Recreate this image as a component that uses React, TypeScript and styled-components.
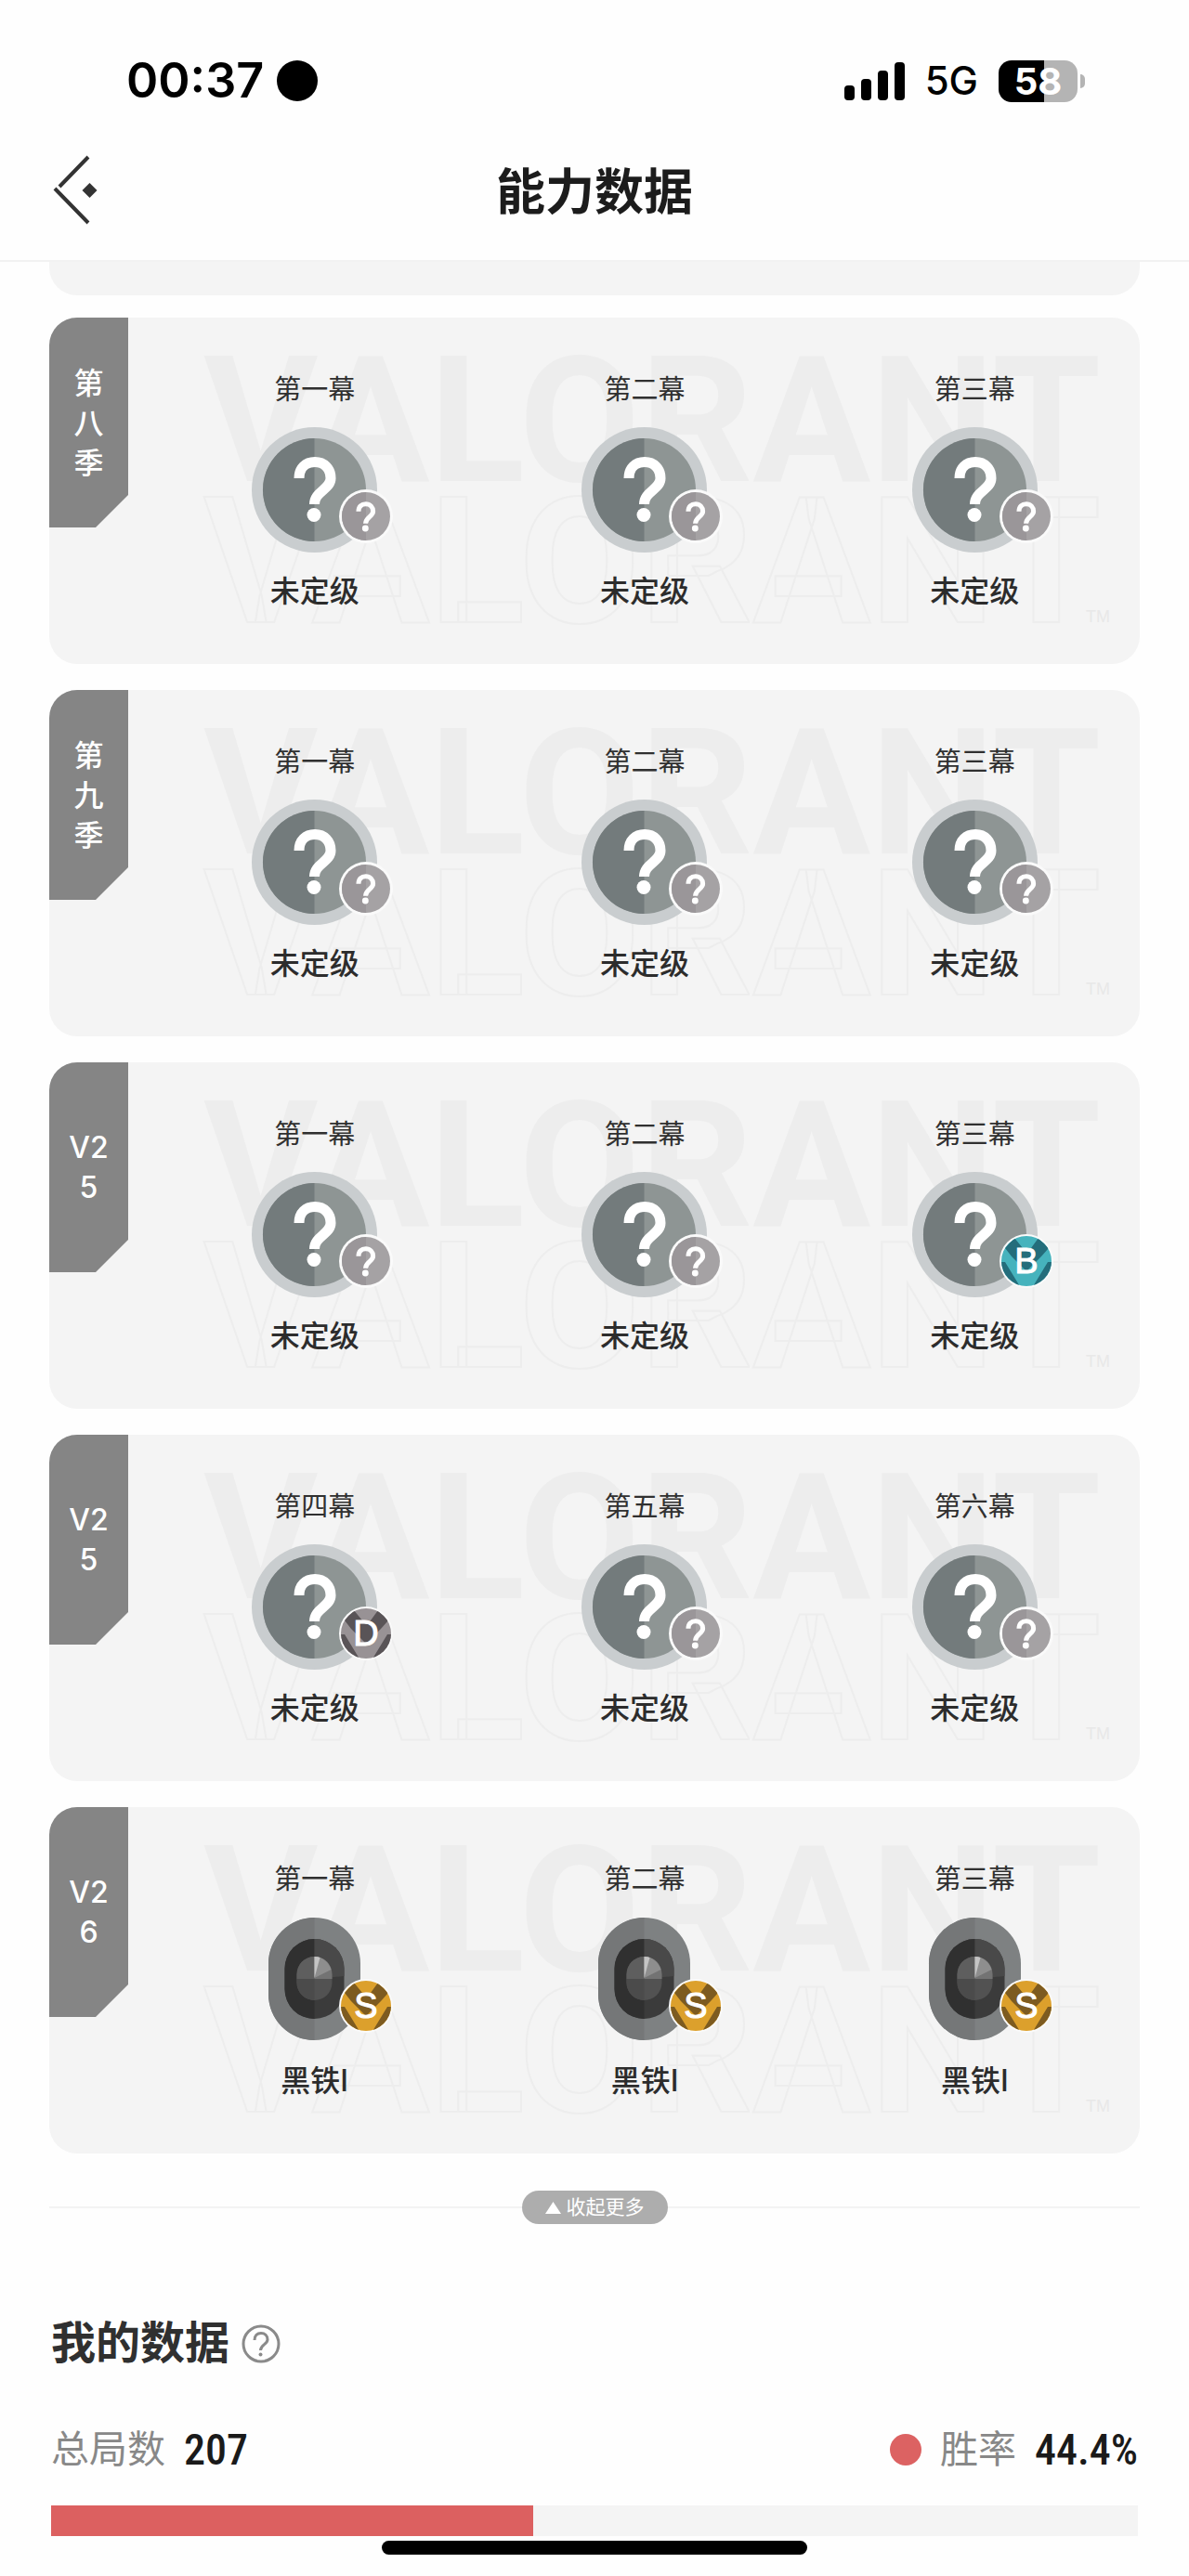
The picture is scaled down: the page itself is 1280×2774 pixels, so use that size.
import React from "react";
import styled, { createGlobalStyle } from "styled-components";

const GlobalStyle = createGlobalStyle`
  *, *::before, *::after { box-sizing: border-box; }
  body {
    margin: 0;
    background: #fefefe;
    color: #303030;
    font-family: "Liberation Sans", "Noto Sans CJK SC", sans-serif;
  }
`;

const Page = styled.div`
  display: flex;
  flex-direction: column;
`;

/* ---------- status bar ---------- */

const StatusBar = styled.div`
  display: flex;
  align-items: center;
  justify-content: space-between;
  height: 130px;
  padding: 44px 112px 0 136px;
  color: #000;
  font-family: Inter, sans-serif;
`;

const StatusGroup = styled.div<{ $gap: number }>`
  display: flex;
  align-items: center;
  gap: ${(p) => p.$gap}px;
`;

const Clock = styled.time`
  font-size: 52px;
  font-weight: 600;
  line-height: 60px;
`;

const RecordingDot = styled.span`
  width: 44px;
  height: 44px;
  border-radius: 50%;
  background: #000;
`;

const Signal = styled.span`
  display: flex;
  align-items: flex-end;
  gap: 7px;
  height: 42px;
`;

const SignalBar = styled.i<{ $height: number }>`
  width: 11px;
  height: ${(p) => p.$height}px;
  border-radius: 4px;
  background: #000;
`;

const Network = styled.span`
  font-size: 42px;
  font-weight: 500;
  line-height: 60px;
`;

const BatteryWrap = styled.span`
  display: flex;
  align-items: center;
  gap: 3px;
`;

const Battery = styled.span`
  display: flex;
  align-items: center;
  justify-content: center;
  width: 85px;
  height: 45px;
  border-radius: 14px;
  background: linear-gradient(90deg, #000 58%, #b4b4b4 58%);
  color: #fff;
  font-size: 40px;
  font-weight: 700;
  line-height: 45px;
`;

const BatteryNub = styled.i`
  width: 5px;
  height: 15px;
  border-radius: 0 5px 5px 0;
  background: #b4b4b4;
`;

/* ---------- navigation ---------- */

const NavBar = styled.header`
  display: grid;
  grid-template-columns: 1fr auto 1fr;
  align-items: center;
  height: 152px;
  padding: 0 53px;
  border-bottom: 2px solid #f2f2f2;
`;

const BackButton = styled.button`
  justify-self: start;
  display: flex;
  padding: 0;
  border: 0;
  background: none;
  cursor: pointer;
`;

const NavTitle = styled.h1`
  margin: 0;
  padding-top: 6px;
  color: #1c1c1c;
  font-size: 53px;
  font-weight: 700;
  line-height: 80px;
`;

/* ---------- season cards ---------- */

const Content = styled.main`
  display: flex;
  flex-direction: column;
  padding: 0 53px;
`;

const CardTail = styled.div`
  height: 36px;
  border-radius: 0 0 30px 30px;
  background: #f4f4f4;
`;

const SeasonList = styled.div`
  display: flex;
  flex-direction: column;
  gap: 28px;
  padding-top: 24px;
`;

const Card = styled.section`
  position: relative;
  overflow-x: clip;
  padding: 58px 0 56px 108px;
  border-radius: 30px;
  background: #f4f4f4;
`;

const SeasonTab = styled.h2`
  position: absolute;
  top: 0;
  left: 0;
  display: flex;
  align-items: center;
  justify-content: center;
  width: 85px;
  height: 226px;
  margin: 0;
  padding: 0 20px;
  border-top-left-radius: 30px;
  background: #858585;
  clip-path: polygon(0 0, 100% 0, 100% 191px, 50px 100%, 0 100%);
  color: #fff;
  font-family: Inter, "Noto Sans CJK SC", sans-serif;
  font-size: 32px;
  font-weight: 500;
  line-height: 43px;
  text-align: center;
  word-break: break-all;
`;

const Watermark = styled.div`
  position: absolute;
  top: 36px;
  left: 166px;
  color: #ededed;
  font-family: Roboto, sans-serif;
  font-size: 189px;
  font-weight: 700;
  line-height: 152px;
  white-space: nowrap;
  user-select: none;
`;

const WatermarkOutline = styled.div`
  color: #f4f4f4;
  -webkit-text-stroke: 2px #ededed;
`;

const TradeMark = styled.span`
  position: absolute;
  right: 32px;
  bottom: 42px;
  color: #e8e8e8;
  font-size: 18px;
  line-height: 18px;
`;

const ActGrid = styled.div`
  position: relative;
  display: grid;
  grid-template-columns: repeat(3, 1fr);
`;

const Act = styled.article`
  display: flex;
  flex-direction: column;
  align-items: center;
`;

const ActName = styled.h3`
  margin: 0 0 20px;
  font-size: 29px;
  font-weight: 400;
  line-height: 40px;
`;

const RankName = styled.p`
  margin: 20px 0 0;
  color: #2c2c2c;
  font-family: Inter, "Noto Sans CJK SC", sans-serif;
  font-size: 32px;
  font-weight: 500;
  line-height: 44px;
`;

const Emblem = styled.div`
  position: relative;
  width: 135px;
  height: 135px;
  svg { display: block; }
`;

const GradeSlot = styled.div`
  position: absolute;
  right: -17px;
  bottom: 10px;
`;

/* ---------- collapse control ---------- */

const CollapseRow = styled.div`
  display: flex;
  align-items: center;
  margin-top: 40px;
  &::before, &::after {
    content: "";
    flex: 1;
    height: 2px;
    background: #f3f3f3;
  }
`;

const CollapseButton = styled.button`
  display: flex;
  align-items: center;
  gap: 6px;
  height: 36px;
  padding: 0 25px;
  border: 0;
  border-radius: 18px;
  background: #adadad;
  color: #fff;
  font-family: inherit;
  font-size: 21px;
  line-height: 36px;
  cursor: pointer;
`;

/* ---------- my data ---------- */

const DataSection = styled.section`
  display: flex;
  flex-direction: column;
  margin-top: 99px;
  padding: 0 2px;
`;

const DataHeading = styled.div`
  display: flex;
  align-items: center;
  gap: 13px;
`;

const DataTitle = styled.h2`
  margin: 0;
  font-size: 48px;
  font-weight: 700;
  line-height: 60px;
`;

const HelpButton = styled.button`
  display: flex;
  padding: 0;
  border: 0;
  background: none;
  cursor: pointer;
`;

const StatRow = styled.div`
  display: flex;
  justify-content: space-between;
  margin: 56px 0 32px;
`;

const Stat = styled.div`
  display: flex;
  align-items: center;
  gap: 20px;
  height: 56px;
`;

const StatLabel = styled.span`
  color: #888;
  font-size: 41px;
  line-height: 56px;
`;

const StatValue = styled.strong`
  color: #1a1a1a;
  font-family: "Liberation Sans Narrow", "Roboto Condensed", Roboto, sans-serif;
  font-size: 46px;
  font-weight: 500;
  line-height: 56px;
`;

const WinDot = styled.i`
  width: 34px;
  height: 34px;
  border-radius: 50%;
  background: #dc6262;
`;

const Track = styled.div`
  height: 33px;
  background: #f4f4f4;
`;

const Fill = styled.div`
  height: 100%;
  background: #dc6060;
`;

const HomeArea = styled.footer`
  display: flex;
  justify-content: center;
  padding: 5px 0 24px;
`;

const HomeIndicator = styled.div`
  width: 458px;
  height: 15px;
  border-radius: 8px;
  background: #000;
`;

/* ---------- drawings ---------- */

const QuestionStroke = () => (
  <>
    <path
      d="M51 55C51 44 58 37.500 68 37.500C78 37.500 85 44.500 85 55C85 67 67.500 69 67.500 83"
      fill="none"
      stroke="#fff"
      strokeWidth="11"
    />
    <circle cx="67" cy="94.500" r="7.500" fill="#fff" />
  </>
);

const UnrankedEmblem = () => (
  <svg width="135" height="135" viewBox="0 0 135 135" aria-hidden="true">
    <circle cx="67.500" cy="67.500" r="67.500" fill="#c9cdcf" />
    <circle cx="67.500" cy="67.500" r="55.500" fill="#8e9594" />
    <path d="M67.500 12a55.500 55.500 0 0 0 0 111z" fill="#737b7c" />
    <QuestionStroke />
  </svg>
);

const IronEmblem = () => (
  <svg width="135" height="135" viewBox="0 0 135 135" aria-hidden="true">
    <rect x="18" y="1" width="99" height="132" rx="49.500" fill="#7e8182" />
    <path d="M67.500 1v132A49.500 49.500 0 0 1 18 83.500v-33A49.500 49.500 0 0 1 67.500 1z" fill="#757778" />
    <rect x="35.500" y="24" width="64" height="86" rx="32" fill="#3b3b3b" />
    <path d="M67.500 24v86a32 32 0 0 1-32-32V56a32 32 0 0 1 32-32z" fill="#303030" />
    <path d="M67.500 24a32 32 0 0 1 32 32v8L67.500 67z" fill="#494949" />
    <rect x="48.500" y="43" width="38" height="47" rx="19" fill="#525252" />
    <path d="M67.500 43v24h-19v-5a19 19 0 0 1 19-19z" fill="#5e5e5e" />
    <path d="M67.500 43a19 19 0 0 1 19 19v5h-19z" fill="#737373" />
    <path d="M67.500 43a19 19 0 0 1 18 14l-18 9z" fill="#8e8e8e" />
    <path d="M67.500 43q4 0 6 1l-6 22z" fill="#c4c4c4" />
    <path d="M67.500 67v23a19 19 0 0 1-19-19v-4z" fill="#4b4b4b" />
  </svg>
);

type Grade = "?" | "B" | "D" | "S";

const gradeColors: Record<Exclude<Grade, "?">, { base: string; dark: string }> = {
  B: { base: "#46b3bd", dark: "#246d7b" },
  D: { base: "#989295", dark: "#595457" },
  S: { base: "#dca02c", dark: "#7d5b20" },
};

const GradeBadge = ({ grade }: { grade: Grade }) => {
  const clipId = React.useId();
  if (grade === "?") {
    return (
      <svg width="58" height="58" viewBox="0 0 58 58" aria-hidden="true">
        <circle cx="29" cy="29" r="29" fill="#fafafa" />
        <circle cx="29" cy="29" r="26" fill="#a5a2a4" />
        <path d="M29 3a26 26 0 0 0 0 52z" fill="#9a9699" />
        <g transform="translate(-2.500 -1.500) scale(.46)">
          <QuestionStroke />
        </g>
      </svg>
    );
  }
  const c = gradeColors[grade];
  return (
    <svg width="58" height="58" viewBox="0 0 58 58" role="img" aria-label={grade}>
      <clipPath id={clipId}>
        <circle cx="29" cy="29" r="27" />
      </clipPath>
      <circle cx="29" cy="29" r="29" fill="#fafafa" />
      <g clipPath={`url(#${clipId})`}>
        <rect width="58" height="58" fill={c.base} />
        <path d="M6 15L16 4l9 11h9L42 4l11 11-8 9-16 16-16-16z" fill={c.dark} />
        <path d="M0 30h6l17 28H0zM58 30h-6L35 58h23z" fill={c.dark} />
      </g>
      <text
        x="29"
        y="42"
        textAnchor="middle"
        fill="#fff"
        fontFamily="'Liberation Sans', sans-serif"
        fontSize="38"
        stroke="#fff"
        strokeWidth="1"
      >
        {grade}
      </text>
    </svg>
  );
};

/* ---------- data ---------- */

type ActData = { name: string; rank: "未定级" | "黑铁I"; grade: Grade };

const act = (name: string, grade: Grade = "?", rank: ActData["rank"] = "未定级"): ActData => ({
  name,
  rank,
  grade,
});

const seasons: { id: string; label: string; acts: ActData[] }[] = [
  { id: "s8", label: "第八季", acts: [act("第一幕"), act("第二幕"), act("第三幕")] },
  { id: "s9", label: "第九季", acts: [act("第一幕"), act("第二幕"), act("第三幕")] },
  { id: "v25a", label: "V25", acts: [act("第一幕"), act("第二幕"), act("第三幕", "B")] },
  { id: "v25b", label: "V25", acts: [act("第四幕", "D"), act("第五幕"), act("第六幕")] },
  {
    id: "v26",
    label: "V26",
    acts: [act("第一幕", "S", "黑铁I"), act("第二幕", "S", "黑铁I"), act("第三幕", "S", "黑铁I")],
  },
];

const winRate = 44.4;

const SeasonCard = ({ label, acts }: { label: string; acts: ActData[] }) => (
  <Card>
    <Watermark aria-hidden="true">
      <div>VALORANT</div>
      <WatermarkOutline>VALORANT</WatermarkOutline>
    </Watermark>
    <TradeMark aria-hidden="true">TM</TradeMark>
    <SeasonTab>{label}</SeasonTab>
    <ActGrid>
      {acts.map((a) => (
        <Act key={a.name}>
          <ActName>{a.name}</ActName>
          <Emblem>
            {a.rank === "未定级" ? <UnrankedEmblem /> : <IronEmblem />}
            <GradeSlot>
              <GradeBadge grade={a.grade} />
            </GradeSlot>
          </Emblem>
          <RankName>{a.rank}</RankName>
        </Act>
      ))}
    </ActGrid>
  </Card>
);

export default function App() {
  return (
    <Page>
      <GlobalStyle />
      <StatusBar>
        <StatusGroup $gap={14}>
          <Clock>00:37</Clock>
          <RecordingDot />
        </StatusGroup>
        <StatusGroup $gap={22}>
          <Signal>
            {[16, 23, 32, 41].map((h) => (
              <SignalBar key={h} $height={h} />
            ))}
          </Signal>
          <Network>5G</Network>
          <BatteryWrap>
            <Battery>58</Battery>
            <BatteryNub />
          </BatteryWrap>
        </StatusGroup>
      </StatusBar>

      <NavBar>
        <BackButton aria-label="返回">
          <svg width="54" height="76" viewBox="0 0 54 76" aria-hidden="true">
            <path d="M42 2L11 34M6 36l36 37" fill="none" stroke="#333" strokeWidth="4" />
            <path d="M43.500 30l8 8-8 8-8-8z" fill="#333" />
          </svg>
        </BackButton>
        <NavTitle>能力数据</NavTitle>
      </NavBar>

      <Content>
        <CardTail />
        <SeasonList>
          {seasons.map((s) => (
            <SeasonCard key={s.id} label={s.label} acts={s.acts} />
          ))}
        </SeasonList>

        <CollapseRow>
          <CollapseButton>
            <svg width="17" height="13" viewBox="0 0 17 13" aria-hidden="true">
              <path d="M8.500 0L17 13H0z" fill="#fff" />
            </svg>
            收起更多
          </CollapseButton>
        </CollapseRow>

        <DataSection>
          <DataHeading>
            <DataTitle>我的数据</DataTitle>
            <HelpButton aria-label="数据说明">
              <svg width="42" height="42" viewBox="0 0 42 42" aria-hidden="true">
                <circle cx="21" cy="21" r="19" fill="none" stroke="#8a8a8a" strokeWidth="3" />
                <path
                  d="M14 17C14 12 17 9.500 21 9.500S28 12 28 16.500C28 21.500 20.500 22 20.500 28"
                  fill="none"
                  stroke="#8a8a8a"
                  strokeWidth="3"
                />
                <circle cx="20.500" cy="32.500" r="2" fill="#8a8a8a" />
              </svg>
            </HelpButton>
          </DataHeading>
          <StatRow>
            <Stat>
              <StatLabel>总局数</StatLabel>
              <StatValue>207</StatValue>
            </Stat>
            <Stat>
              <WinDot />
              <StatLabel>胜率</StatLabel>
              <StatValue>{winRate}%</StatValue>
            </Stat>
          </StatRow>
          <Track role="progressbar" aria-label="胜率" aria-valuenow={winRate} aria-valuemin={0} aria-valuemax={100}>
            <Fill style={{ width: `${winRate}%` }} />
          </Track>
        </DataSection>
      </Content>

      <HomeArea>
        <HomeIndicator />
      </HomeArea>
    </Page>
  );
}
